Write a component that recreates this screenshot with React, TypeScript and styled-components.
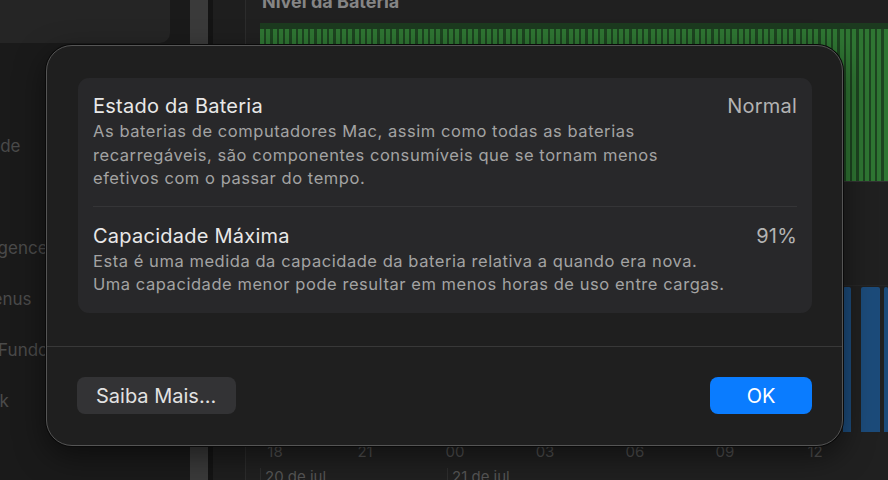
import React, { FC } from 'react';
import styled, { createGlobalStyle } from 'styled-components';

const GlobalStyle = createGlobalStyle`
    html, body {
        margin: 0;
        padding: 0;
        background: #1c1c1c;
    }
    body {
        font-family: Inter, "Noto Sans", "DejaVu Sans", sans-serif;
        -webkit-font-smoothing: antialiased;
    }
`;

const Screen = styled.div`
    position: relative;
    width: 888px;
    height: 480px;
    overflow: hidden;
    display: flex;
    background: #1e1e1e;
`;

// Background: settings window behind the sheet
const Sidebar = styled.div`
    width: 190px;
    flex-shrink: 0;
    background: #1a1a1a;
    display: flex;
    flex-direction: column;
`;

const SidebarTop = styled.div`
    width: 170px;
    height: 43px;
    flex-shrink: 0;
    background: #252525;
    border-bottom-right-radius: 10px;
`;

const SidebarList = styled.div`
    display: flex;
    flex-direction: column;
    margin-left: -96px;
    margin-top: 26px;
`;

const SidebarItem = styled.div`
    height: 51px;
    flex-shrink: 0;
    display: flex;
    align-items: center;
    white-space: nowrap;
    font-size: 17px;
    color: #4a4a4a;
`;

const ScrollStrip = styled.div`
    width: 18px;
    flex-shrink: 0;
    background: #3a3a3a;
    border-right: 5px solid #141414;
`;

const Main = styled.div`
    flex: 1;
    padding-left: 32px;
    display: flex;
    background: #1e1e1e;
`;

const ChartCard = styled.div`
    flex: 1;
    border-left: 1px solid #2c2c2c;
    background: #202020;
    padding-left: 14px;
    display: flex;
    flex-direction: column;

    & > * {
        flex-shrink: 0;
    }
`;

const ChartTitle = styled.div`
    margin-top: -9px;
    margin-left: 2px;
    font-size: 18px;
    font-weight: 700;
    color: #858585;
    height: 24px;
`;

const GreenChart = styled.div`
    margin-top: 8px;
    height: 152px;
    border-top: 6px solid #1c3a1f;
    background: repeating-linear-gradient(
        90deg,
        #2f7633 0px,
        #2f7633 4px,
        #1d4420 4px,
        #1d4420 6.3px
    );
    border-bottom: 1px solid #333;
`;

const BlueChart = styled.div`
    margin-top: 103px;
    height: 146px;
    display: flex;
    justify-content: flex-end;
    align-items: flex-end;
    border-top: 1px solid #262626;
`;

const BlueBar = styled.div<{ $w: number; $gap: number }>`
    width: ${(p) => p.$w}px;
    margin-right: ${(p) => p.$gap}px;
    height: 145px;
    background: #1c4b7a;
    border-radius: 2px 2px 0 0;
`;

const AxisRow = styled.div`
    margin-left: -30px;
    margin-top: 11px;
    display: grid;
    grid-template-columns: repeat(7, 90px);
    font-size: 15px;
    line-height: 18px;
    color: #4f4f4f;
`;

const AxisLabel = styled.span`
    text-align: center;
`;

const DateRow = styled.div`
    margin-top: 7px;
    display: flex;
    font-size: 15px;
    line-height: 18px;
    color: #555;
`;

const DateLabel = styled.span<{ $w: number }>`
    width: ${(p) => p.$w}px;
    padding-left: 4px;
    border-left: 1px solid #2e2e2e;
`;

// Sheet
const Sheet = styled.div`
    position: absolute;
    left: 46px;
    top: 45px;
    width: 797px;
    height: 401px;
    box-sizing: border-box;
    background: #1f1f1f;
    border: 1px solid #555555;
    border-radius: 26px;
    box-shadow: 0 0 0 1px #0a0a0a, 0 10px 30px rgba(0, 0, 0, 0.5);
    display: flex;
    flex-direction: column;
`;

const SheetBody = styled.div`
    padding: 32px 30px 33px 31px;
    border-bottom: 1px solid #383838;
`;

const InfoCard = styled.div`
    background: #28282a;
    border-radius: 11px;
    padding: 0 15px;
`;

const InfoRow = styled.div`
    display: flex;
    justify-content: space-between;
    align-items: flex-start;
    padding: 16px 0 16px;

    &:first-child {
        padding-bottom: 15px;
    }

    & + & {
        border-top: 1px solid #353537;
        padding-top: 17px;
    }
`;

const InfoText = styled.div`
    display: flex;
    flex-direction: column;
    gap: 2px;
`;

const InfoTitle = styled.div`
    font-size: 20px;
    line-height: 24px;
    letter-spacing: 0.25px;
    color: #e8e8e8;
`;

const InfoDesc = styled.div`
    font-size: 16.5px;
    line-height: 23.5px;
    letter-spacing: 0.55px;
    color: #a3a3a3;
    white-space: nowrap;
`;

const InfoValue = styled.div`
    font-size: 20px;
    line-height: 24px;
    letter-spacing: 0.2px;
    color: #b3b3b3;
`;

const Footer = styled.div`
    flex: 1;
    display: flex;
    justify-content: space-between;
    align-items: center;
    padding: 0 30px 0 30px;
`;

const Button = styled.button<{ $primary?: boolean }>`
    height: 37px;
    min-width: ${(p) => (p.$primary ? '102px' : '159px')};
    border: none;
    border-radius: 8px;
    padding: 0 19px;
    font-family: inherit;
    font-size: 20px;
    text-align: ${(p) => (p.$primary ? 'center' : 'left')};
    color: ${(p) => (p.$primary ? '#ffffff' : '#e2e2e2')};
    background: ${(p) => (p.$primary ? '#0a7cff' : '#333335')};
`;

const sidebarItems = ['Geral', 'Acessibilidade', 'Aparência', 'Apple Intelligence e Siri', 'Barra de Menus', 'Imagem de Fundo', 'Mesa e Dock', 'Telas'];
const hours = ['18', '21', '00', '03', '06', '09', '12'];
const blueBars = [
    { w: 8, gap: 10 },
    { w: 19, gap: 4 },
    { w: 4, gap: 0 },
];

const App: FC = () => {
    return (
        <>
            <GlobalStyle />
            <Screen>
                <Sidebar>
                    <SidebarTop />
                    <SidebarList>
                        {sidebarItems.map((item) => (
                            <SidebarItem key={item}>{item}</SidebarItem>
                        ))}
                    </SidebarList>
                </Sidebar>
                <ScrollStrip />
                <Main>
                    <ChartCard>
                        <ChartTitle>Nível da Bateria</ChartTitle>
                        <GreenChart />
                        <BlueChart>
                            {blueBars.map((b, i) => (
                                <BlueBar key={i} $w={b.w} $gap={b.gap} />
                            ))}
                        </BlueChart>
                        <AxisRow>
                            {hours.map((h) => (
                                <AxisLabel key={h}>{h}</AxisLabel>
                            ))}
                        </AxisRow>
                        <DateRow>
                            <DateLabel $w={182}>20 de jul.</DateLabel>
                            <DateLabel $w={300}>21 de jul.</DateLabel>
                        </DateRow>
                    </ChartCard>
                </Main>

                <Sheet>
                    <SheetBody>
                        <InfoCard>
                            <InfoRow>
                                <InfoText>
                                    <InfoTitle>Estado da Bateria</InfoTitle>
                                    <InfoDesc>
                                        As baterias de computadores Mac, assim como todas as baterias
                                        <br />
                                        recarregáveis, são componentes consumíveis que se tornam menos
                                        <br />
                                        efetivos com o passar do tempo.
                                    </InfoDesc>
                                </InfoText>
                                <InfoValue>Normal</InfoValue>
                            </InfoRow>
                            <InfoRow>
                                <InfoText>
                                    <InfoTitle>Capacidade Máxima</InfoTitle>
                                    <InfoDesc>
                                        Esta é uma medida da capacidade da bateria relativa a quando era nova.
                                        <br />
                                        Uma capacidade menor pode resultar em menos horas de uso entre cargas.
                                    </InfoDesc>
                                </InfoText>
                                <InfoValue>91%</InfoValue>
                            </InfoRow>
                        </InfoCard>
                    </SheetBody>
                    <Footer>
                        <Button>Saiba Mais...</Button>
                        <Button $primary>OK</Button>
                    </Footer>
                </Sheet>
            </Screen>
        </>
    );
};

export default App;
